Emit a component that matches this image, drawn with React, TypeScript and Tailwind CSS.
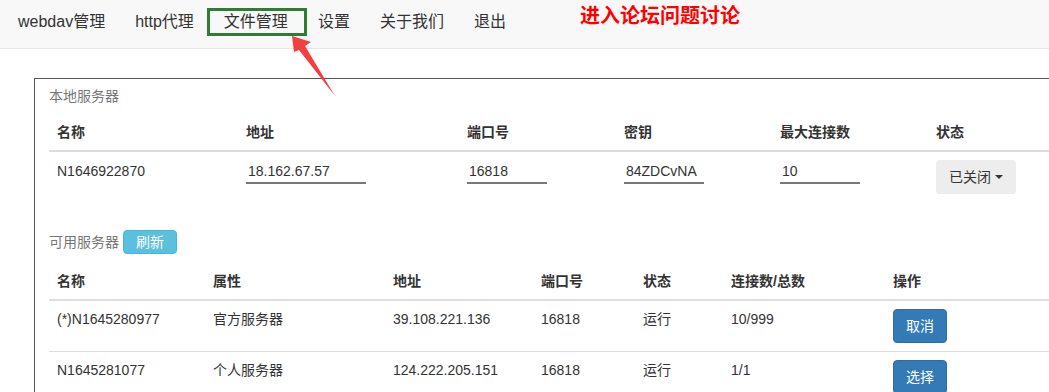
import { FC } from 'react';

const navItems = ['webdav管理', 'http代理', '文件管理', '设置', '关于我们', '退出'];

const localCols = [
  { name: '名称', w: 'w-[189px]' },
  { name: '地址', w: 'w-[221px]' },
  { name: '端口号', w: 'w-[157px]' },
  { name: '密钥', w: 'w-[156px]' },
  { name: '最大连接数', w: 'w-[156px]' },
  { name: '状态', w: 'w-[191px]' },
];

const remoteCols = [
  { name: '名称', w: 'w-[156px]' },
  { name: '属性', w: 'w-[180px]' },
  { name: '地址', w: 'w-[148px]' },
  { name: '端口号', w: 'w-[102px]' },
  { name: '状态', w: 'w-[88px]' },
  { name: '连接数/总数', w: 'w-[162px]' },
  { name: '操作', w: 'w-[234px]' },
];

const servers = [
  { name: '(*)N1645280977', kind: '官方服务器', addr: '39.108.221.136', port: '16818', state: '运行', conn: '10/999', action: '取消' },
  { name: 'N1645281077', kind: '个人服务器', addr: '124.222.205.151', port: '16818', state: '运行', conn: '1/1', action: '选择' },
];

const UnderlineInput: FC<{ value: string; width: string }> = ({ value, width }) => (
  <input
    value={value}
    readOnly
    className={`${width} h-[24px] border-b-2 border-[#777] bg-transparent px-[2px] text-[14px] text-[#333] outline-none`}
  />
);

const App: FC = () => {
  return (
    <div className="relative h-[392px] w-full overflow-hidden bg-white font-['Liberation_Sans','Noto_Sans_CJK_SC',sans-serif] text-[14px] leading-[20px] text-[#333]">
      {/* Navbar */}
      <div className="flex h-[49px] border-b border-[#e7e7e7] bg-[#f8f8f8] pl-[3px]">
        {navItems.map((item) => (
          <a key={item} className="px-[15px] pt-[12px] text-[16px] leading-[20px] text-[#333]">
            {item}
          </a>
        ))}
      </div>

      {/* annotations */}
      <div className="absolute left-[207px] top-[8px] h-[28px] w-[100px] border-[3px] border-[#2e7d32]" />
      <div className="absolute left-[580px] top-[4px] text-[20px] font-bold leading-[24px] text-[#ff0000]">
        进入论坛问题讨论
      </div>
      <svg className="pointer-events-none absolute left-0 top-0" width="1049" height="392">
        <polygon points="292,36 311,42 305,46 335,96 299,50 294,52" fill="#f43f3f" />
      </svg>

      {/* Panel */}
      <div className="ml-[34px] mt-[29px] w-[1100px] border border-[#555] px-[14px] pt-[7px]">
        <div className="text-[#777]">本地服务器</div>

        <table className="mt-[8px] w-[1070px] table-fixed">
          <thead>
            <tr>
              {localCols.map((c) => (
                <th key={c.name} className={`${c.w} border-b-2 border-[#ddd] p-[8px] text-left font-bold`}>
                  {c.name}
                </th>
              ))}
            </tr>
          </thead>
          <tbody>
            <tr>
              <td className="p-[8px] align-top leading-[22px]">N1646922870</td>
              <td className="p-[8px] align-top">
                <UnderlineInput value="18.162.67.57" width="w-[120px]" />
              </td>
              <td className="p-[8px] align-top">
                <UnderlineInput value="16818" width="w-[80px]" />
              </td>
              <td className="p-[8px] align-top">
                <UnderlineInput value="84ZDCvNA" width="w-[80px]" />
              </td>
              <td className="p-[8px] align-top">
                <UnderlineInput value="10" width="w-[80px]" />
              </td>
              <td className="p-[8px] align-top">
                <button className="flex h-[34px] items-center rounded-[4px] bg-[#ededed] px-[13px] text-[#333]">
                  已关闭
                  <span className="ml-[4px] h-0 w-0 border-x-[4px] border-t-[4px] border-x-transparent border-t-[#333]" />
                </button>
              </td>
            </tr>
          </tbody>
        </table>

        <div className="mt-[28px] flex h-[24px] items-center text-[#777]">
          可用服务器
          <button className="ml-[4px] h-[24px] rounded-[4px] border border-[#46b8da] bg-[#5bc0de] px-[12px] text-white">
            刷新
          </button>
        </div>

        <table className="mt-[9px] w-[1070px] table-fixed">
          <thead>
            <tr>
              {remoteCols.map((c) => (
                <th key={c.name} className={`${c.w} border-b-2 border-[#ddd] p-[8px] text-left font-bold`}>
                  {c.name}
                </th>
              ))}
            </tr>
          </thead>
          <tbody>
            {servers.map((s, i) => (
              <tr key={s.name} className={i === 0 ? 'border-b border-[#ddd]' : ''}>
                <td className="p-[8px] align-top">{s.name}</td>
                <td className="p-[8px] align-top">{s.kind}</td>
                <td className="p-[8px] align-top">{s.addr}</td>
                <td className="p-[8px] align-top">{s.port}</td>
                <td className="p-[8px] align-top">{s.state}</td>
                <td className="p-[8px] align-top">{s.conn}</td>
                <td className="p-[8px] align-top">
                  <button className="h-[34px] rounded-[4px] border border-[#2e6da4] bg-[#337ab7] px-[12px] text-white">
                    {s.action}
                  </button>
                </td>
              </tr>
            ))}
          </tbody>
        </table>
      </div>
    </div>
  );
};

export default App;
